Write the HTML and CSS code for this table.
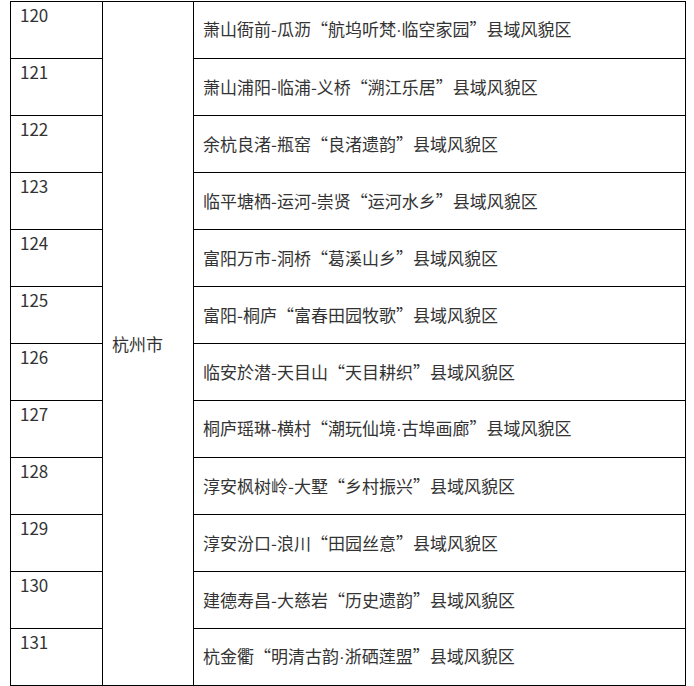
FILE: index.html
```html
<!DOCTYPE html>
<html lang="zh-CN">
<head>
<meta charset="utf-8">
<link rel="stylesheet" href="styles.css">
</head>
<body>
<table class="list">
<colgroup><col class="c-no"><col class="c-city"><col class="c-name"></colgroup>
<tbody>
<tr><td class="no">120</td><td class="city" rowspan="12">杭州市</td><td class="name">萧山衙前-瓜沥“航坞听梵<span class="dot">·</span>临空家园”县域风貌区</td></tr>
<tr><td class="no">121</td><td class="name">萧山浦阳-临浦-义桥“溯江乐居”县域风貌区</td></tr>
<tr><td class="no">122</td><td class="name">余杭良渚-瓶窑“良渚遗韵”县域风貌区</td></tr>
<tr><td class="no">123</td><td class="name">临平塘栖-运河-崇贤“运河水乡”县域风貌区</td></tr>
<tr><td class="no">124</td><td class="name">富阳万市-洞桥“葛溪山乡”县域风貌区</td></tr>
<tr><td class="no">125</td><td class="name">富阳-桐庐“富春田园牧歌”县域风貌区</td></tr>
<tr><td class="no">126</td><td class="name">临安於潜-天目山“天目耕织”县域风貌区</td></tr>
<tr><td class="no">127</td><td class="name">桐庐瑶琳-横村“潮玩仙境<span class="dot">·</span>古埠画廊”县域风貌区</td></tr>
<tr><td class="no">128</td><td class="name">淳安枫树岭-大墅“乡村振兴”县域风貌区</td></tr>
<tr><td class="no">129</td><td class="name">淳安汾口-浪川“田园丝意”县域风貌区</td></tr>
<tr><td class="no">130</td><td class="name">建德寿昌-大慈岩“历史遗韵”县域风貌区</td></tr>
<tr><td class="no">131</td><td class="name">杭金衢“明清古韵<span class="dot">·</span>浙硒莲盟”县域风貌区</td></tr>
</tbody>
</table>
</body>
</html>
```
FILE: styles.css
```css
html, body {
  margin: 0;
  padding: 0;
  background: #fff;
}
body {
  padding: 1px 0 0 10px;
  font-family: "Noto Sans CJK SC", "Noto Sans", sans-serif;
  font-size: 17px;
  color: #333;
}
.list {
  border-collapse: collapse;
  table-layout: fixed;
  width: 675px;
}
.c-no { width: 92px; }
.c-city { width: 91px; }
.c-name { width: 492px; }
.list td {
  border: 1px solid #000;
  padding: 0 9px;
  line-height: 22px;
}
.list tr { height: 57px; }
.no {
  vertical-align: top;
  padding-top: 2px !important;
}
.city, .name {
  vertical-align: middle;
}
.name { white-space: nowrap; }
.dot {
  font-family: "Liberation Sans", sans-serif;
}
```
